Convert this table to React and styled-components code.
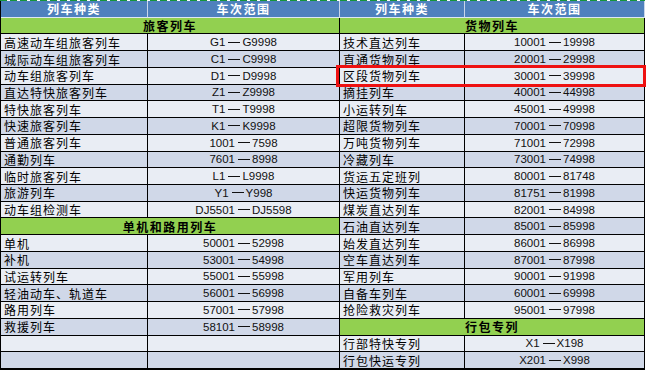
import React from 'react'
import styled, { createGlobalStyle } from 'styled-components'

const GlobalStyle = createGlobalStyle`
    html, body {
        margin: 0;
        padding: 0;
        background: #ffffff;
    }
    body {
        font-family: "Liberation Sans", "Noto Sans CJK SC", sans-serif;
    }
`

const Page = styled.div`
    position: relative;
    width: 647px;
    height: 384px;
    overflow: hidden;
`

const TopBar = styled.div`
    height: 1px;
    width: 645px;
    background: repeating-linear-gradient(90deg, #15953a 0 7px, #ffffff 7px 10px);
`

const Table = styled.div`
    box-sizing: border-box;
    width: 645px;
    height: 369px;
    display: grid;
    grid-template-columns: 147px 192px 125px 180px;
    grid-template-rows: repeat(22, 1fr);
    border-left: 1px solid #000;
    border-bottom: 1px solid #000;
`

const Cell = styled.div`
    box-sizing: border-box;
    display: flex;
    align-items: center;
    overflow: hidden;
    white-space: nowrap;
    border-right: 1px solid #000;
    border-bottom: 1px solid #000;
    font-size: 12px;
    color: #000;
`

const HeadCell = styled(Cell)`
    justify-content: center;
    background: #4f81bd;
    color: #ffffff;
    font-weight: bold;
    font-family: "Noto Sans CJK SC", sans-serif;
    letter-spacing: 1.5px;
    border-right: 1px solid #c9d6ea;
    border-bottom: 1px solid #dfe8f3;
`

const SectionCell = styled(Cell)`
    grid-column: span 2;
    justify-content: center;
    background: #92d050;
    font-weight: bold;
    font-family: "Noto Sans CJK SC", sans-serif;
    letter-spacing: 1.5px;
`

const NameCell = styled(Cell)`
    padding-left: 3px;
    font-family: "Noto Sans CJK SC", sans-serif;
    letter-spacing: 1px;
    background: ${p => (p.$alt ? '#d0d8e8' : '#e9edf4')};
`

const RangeCell = styled(Cell)`
    justify-content: center;
    font-family: "Liberation Sans", sans-serif;
    font-size: 11.5px;
    color: #111;
    background: ${p => (p.$alt ? '#d0d8e8' : '#e9edf4')};
`

const Dash = styled.span`
    display: inline-block;
    width: 12px;
    height: 1px;
    margin: 0 2px 0 3px;
    background: #111;
`

const Highlight = styled.div`
    position: absolute;
    left: 336px;
    top: 65px;
    width: 310px;
    height: 22px;
    box-sizing: border-box;
    border: 3px solid #ee1111;
    pointer-events: none;
`

const left = [
    { section: '旅客列车' },
    ['高速动车组旅客列车', 'G1—G9998'],
    ['城际动车组旅客列车', 'C1—C9998'],
    ['动车组旅客列车', 'D1—D9998'],
    ['直达特快旅客列车', 'Z1—Z9998'],
    ['特快旅客列车', 'T1—T9998'],
    ['快速旅客列车', 'K1—K9998'],
    ['普通旅客列车', '1001—7598'],
    ['通勤列车', '7601—8998'],
    ['临时旅客列车', 'L1—L9998'],
    ['旅游列车', 'Y1—Y998'],
    ['动车组检测车', 'DJ5501—DJ5598'],
    { section: '单机和路用列车' },
    ['单机', '50001—52998'],
    ['补机', '53001—54998'],
    ['试运转列车', '55001—55998'],
    ['轻油动车、轨道车', '56001—56998'],
    ['路用列车', '57001—57998'],
    ['救援列车', '58101—58998'],
    ['', ''],
    ['', ''],
]

const right = [
    { section: '货物列车' },
    ['技术直达列车', '10001—19998'],
    ['直通货物列车', '20001—29998'],
    ['区段货物列车', '30001—39998'],
    ['摘挂列车', '40001—44998'],
    ['小运转列车', '45001—49998'],
    ['超限货物列车', '70001—70998'],
    ['万吨货物列车', '71001—72998'],
    ['冷藏列车', '73001—74998'],
    ['货运五定班列', '80001—81748'],
    ['快运货物列车', '81751—81998'],
    ['煤炭直达列车', '82001—84998'],
    ['石油直达列车', '85001—85998'],
    ['始发直达列车', '86001—86998'],
    ['空车直达列车', '87001—87998'],
    ['军用列车', '90001—91998'],
    ['自备车列车', '60001—69998'],
    ['抢险救灾列车', '95001—97998'],
    { section: '行包专列' },
    ['行部特快专列', 'X1—X198'],
    ['行包快运专列', 'X201—X998'],
]

function Range({ text }) {
    if (!text) return null
    const [from, to] = text.split('—')
    return (
        <>
            {from}
            <Dash aria-label="—" />
            {to}
        </>
    )
}

function renderPart(item, rowIndex, key) {
    if (item.section) {
        return <SectionCell key={key}>{item.section}</SectionCell>
    }
    // first data row (index 2 overall) is light, then alternate
    const alt = rowIndex % 2 === 1
    return [
        <NameCell key={key + 'n'} $alt={alt}>{item[0]}</NameCell>,
        <RangeCell key={key + 'r'} $alt={alt}><Range text={item[1]} /></RangeCell>,
    ]
}

export default function App() {
    const rows = left.map((l, i) => {
        const rowIndex = i + 1
        return (
            <React.Fragment key={i}>
                {renderPart(l, rowIndex, 'l' + i)}
                {renderPart(right[i], rowIndex, 'r' + i)}
            </React.Fragment>
        )
    })

    return (
        <Page>
            <GlobalStyle />
            <TopBar />
            <Table>
                <HeadCell>列车种类</HeadCell>
                <HeadCell>车次范围</HeadCell>
                <HeadCell>列车种类</HeadCell>
                <HeadCell>车次范围</HeadCell>
                {rows}
            </Table>
            <Highlight />
        </Page>
    )
}
